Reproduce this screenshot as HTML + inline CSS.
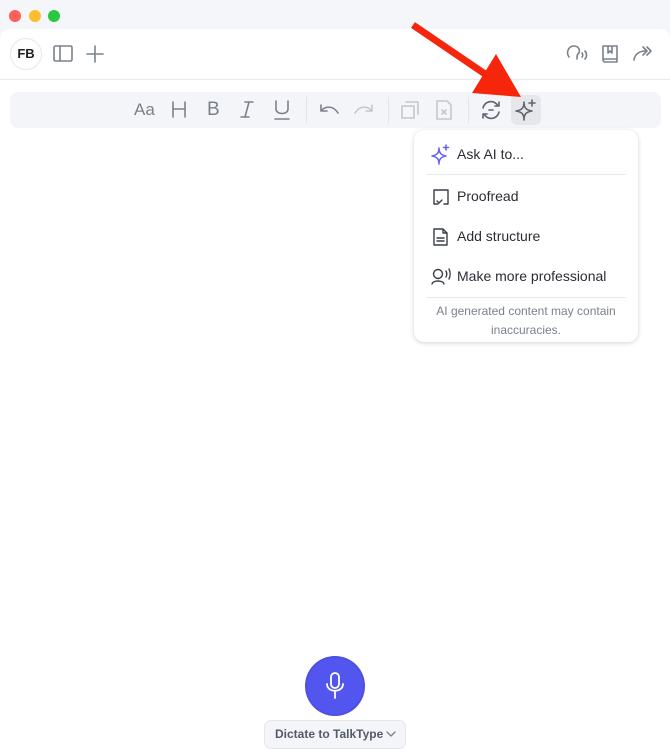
<!DOCTYPE html>
<html><head><style>
*{margin:0;padding:0;box-sizing:border-box}
body{width:670px;height:754px;background:#f5f6fa;font-family:"Liberation Sans",sans-serif;position:relative;overflow:hidden}
.dot{position:absolute;top:10px;width:12px;height:12px;border-radius:50%}
.main{position:absolute;left:0;top:29px;width:670px;height:725px;background:#fff;border-radius:10px 10px 0 0}
.hdr{position:absolute;left:0;top:79px;width:670px;height:1px;background:#e8e9ec}
.tb{position:absolute;left:10px;top:92px;width:651px;height:36px;background:#f4f5f8;border-radius:8px}
svg{position:absolute;fill:none;stroke:#7b818c;stroke-width:1.6;stroke-linecap:round;stroke-linejoin:round}
.menu{position:absolute;left:414px;top:130px;width:224px;height:212px;background:#fff;border-radius:10px;box-shadow:0 1px 5px rgba(0,0,0,.18)}
.mi{position:absolute;left:43px;font-size:14px;color:#2a2d33}
.sep{position:absolute;left:12px;width:200px;height:1px;background:#e8e9ec}
</style></head><body>
<div class="dot" style="left:9px;background:#fe5f57"></div>
<div class="dot" style="left:29px;background:#febc2e"></div>
<div class="dot" style="left:48px;background:#28c840"></div>
<div class="main"></div>
<div class="hdr"></div>
<div style="position:absolute;left:10px;top:38px;width:32px;height:32px;border-radius:50%;border:1.5px solid #e6e7ea;background:#fff;font-size:13px;font-weight:bold;color:#222;text-align:center;line-height:29px">FB</div>
<svg style="left:53px;top:45px" width="20" height="17"><rect x="1" y="1" width="18" height="15" rx="1.5"/><line x1="7" y1="1" x2="7" y2="16"/></svg>
<svg style="left:86px;top:45px" width="18" height="18"><path d="M9 1V17M1 9H17"/></svg>
<svg style="left:566px;top:44px" width="24" height="20"><path d="M3 13C0 9 2 2 8 2C13 2 15 7 12 10C11 11 11 12 11 15"/><path d="M16 9C17 10 17 12 16 13M19 7C21 9 21 13 19 15"/></svg>
<svg style="left:601px;top:44px" width="18" height="20"><path d="M2 2H16V18H4C3 18 2 17 2 16Z M2 15H16 M7 2V9L9 7L11 9V2"/></svg>
<svg style="left:632px;top:44px" width="22" height="18"><path d="M2 16C3 10 7 7 14 7M11 3L15 7L11 11M15 3L19 7L15 11"/></svg>
<div class="tb"></div>
<div style="position:absolute;left:134px;top:100px;font-size:17px;color:#7b818c">Aa</div>
<svg style="left:171px;top:101px" width="16" height="17"><path d="M2 1V16M14 1V16M2 8H14"/></svg>
<div style="position:absolute;left:207px;top:99px;font-size:19px;color:#7b818c">B</div>
<svg style="left:240px;top:101px" width="14" height="17"><path d="M5 1H13M1 16H9M9 1L5 16"/></svg>
<svg style="left:274px;top:100px" width="16" height="20"><path d="M2 1V9C2 15 14 15 14 9V1M1 19H15"/></svg>
<div style="position:absolute;left:306px;top:97px;width:1px;height:26px;background:#e2e4e8"></div>
<svg style="left:318px;top:103px" width="22" height="14"><path d="M3 2V8H9M3 8C7 3 15 2 20 10"/></svg>
<svg style="left:353px;top:103px;stroke:#c3c7cd" width="22" height="14"><path d="M19 2V8H13M19 8C15 3 7 2 2 10"/></svg>
<div style="position:absolute;left:388px;top:97px;width:1px;height:26px;background:#e2e4e8"></div>
<svg style="left:401px;top:101px;stroke:#c3c7cd" width="18" height="18"><rect x="1" y="5" width="12" height="12"/><path d="M5 1H17V13"/></svg>
<svg style="left:436px;top:100px;stroke:#c3c7cd" width="16" height="20"><path d="M1 1H11L15 5V19H1Z M6 10L10 14M10 10L6 14"/></svg>
<div style="position:absolute;left:468px;top:97px;width:1px;height:26px;background:#e2e4e8"></div>
<svg style="left:480px;top:99px;stroke:#5f6570" width="22" height="22"><path d="M3 9A8 8 0 0 1 18 7M19 13A8 8 0 0 1 4 15M15 7H19V3M7 15H3V19M9 11H13"/></svg>
<div style="position:absolute;left:511px;top:95px;width:30px;height:30px;border-radius:6px;background:#e6e7ea"></div>
<svg style="left:514px;top:98px;stroke:#5f6570" width="24" height="24"><path d="M10 4C10 10 8 12 2 13C8 14 10 16 10 22C10 16 12 14 18 13C12 12 10 10 10 4Z M18 2V8M15 5H21"/></svg>
<svg style="position:absolute;left:408px;top:20px;stroke:#f5260b;stroke-width:7;stroke-linecap:butt" width="125" height="85"><path d="M5 5L80 56"/><path d="M64 73L113 77L88 34Z" fill="#f5260b" stroke="none"/></svg>
<div class="menu">
<svg style="left:16px;top:14px;stroke:#6366f1" width="22" height="22"><path d="M9 4C9 9 7 11 2 12C7 13 9 15 9 20C9 15 11 13 16 12C11 11 9 9 9 4Z M16 1V6M13.5 3.5H18.5"/></svg>
<div class="mi" style="top:16px">Ask AI to...</div>
<div class="sep" style="top:44px"></div>
<svg style="left:18px;top:58px;stroke:#3a3e46;stroke-width:1.4" width="18" height="18"><path d="M6 16H2V2H16V16H12M5 13L7 15L10 12"/></svg>
<div class="mi" style="top:58px">Proofread</div>
<svg style="left:19px;top:98px;stroke:#3a3e46;stroke-width:1.4" width="16" height="18"><path d="M1 1H10L14 5V17H1Z M10 1V5H14M4 10H11M4 13H11"/></svg>
<div class="mi" style="top:98px">Add structure</div>
<svg style="left:17px;top:138px;stroke:#3a3e46;stroke-width:1.4" width="20" height="18"><circle cx="7" cy="6" r="4.5"/><path d="M1 16C2 12 12 12 13 16M15 3C16 5 16 7 15 9M18 1C19.5 4 19.5 8 18 11"/></svg>
<div class="mi" style="top:138px">Make more professional</div>
<div class="sep" style="top:167px"></div>
<div style="position:absolute;left:0;top:172px;width:224px;text-align:center;font-size:12px;line-height:19px;color:#7b818c">AI generated content may contain<br>inaccuracies.</div>
</div>
<div style="position:absolute;left:307px;top:658px;width:56px;height:56px;border-radius:50%;background:#5356ee;box-shadow:0 0 0 2px #4d50e0"></div>
<svg style="left:325px;top:672px;stroke:#fff;stroke-width:1.8" width="20" height="28"><rect x="6" y="1" width="8" height="15" rx="4"/><path d="M2 12C2 21 18 21 18 12M10 20V26"/></svg>
<div style="position:absolute;left:264px;top:720px;width:142px;height:29px;border-radius:7px;background:#f4f5f8;border:1px solid #e4e6ea;font-size:12px;font-weight:bold;color:#555b66;line-height:27px;padding-left:10px">Dictate to TalkType</div>
<svg style="left:386px;top:731px;stroke:#7b818c;stroke-width:1.3" width="10" height="7"><path d="M1 1L5 5L9 1"/></svg>
</body></html>
